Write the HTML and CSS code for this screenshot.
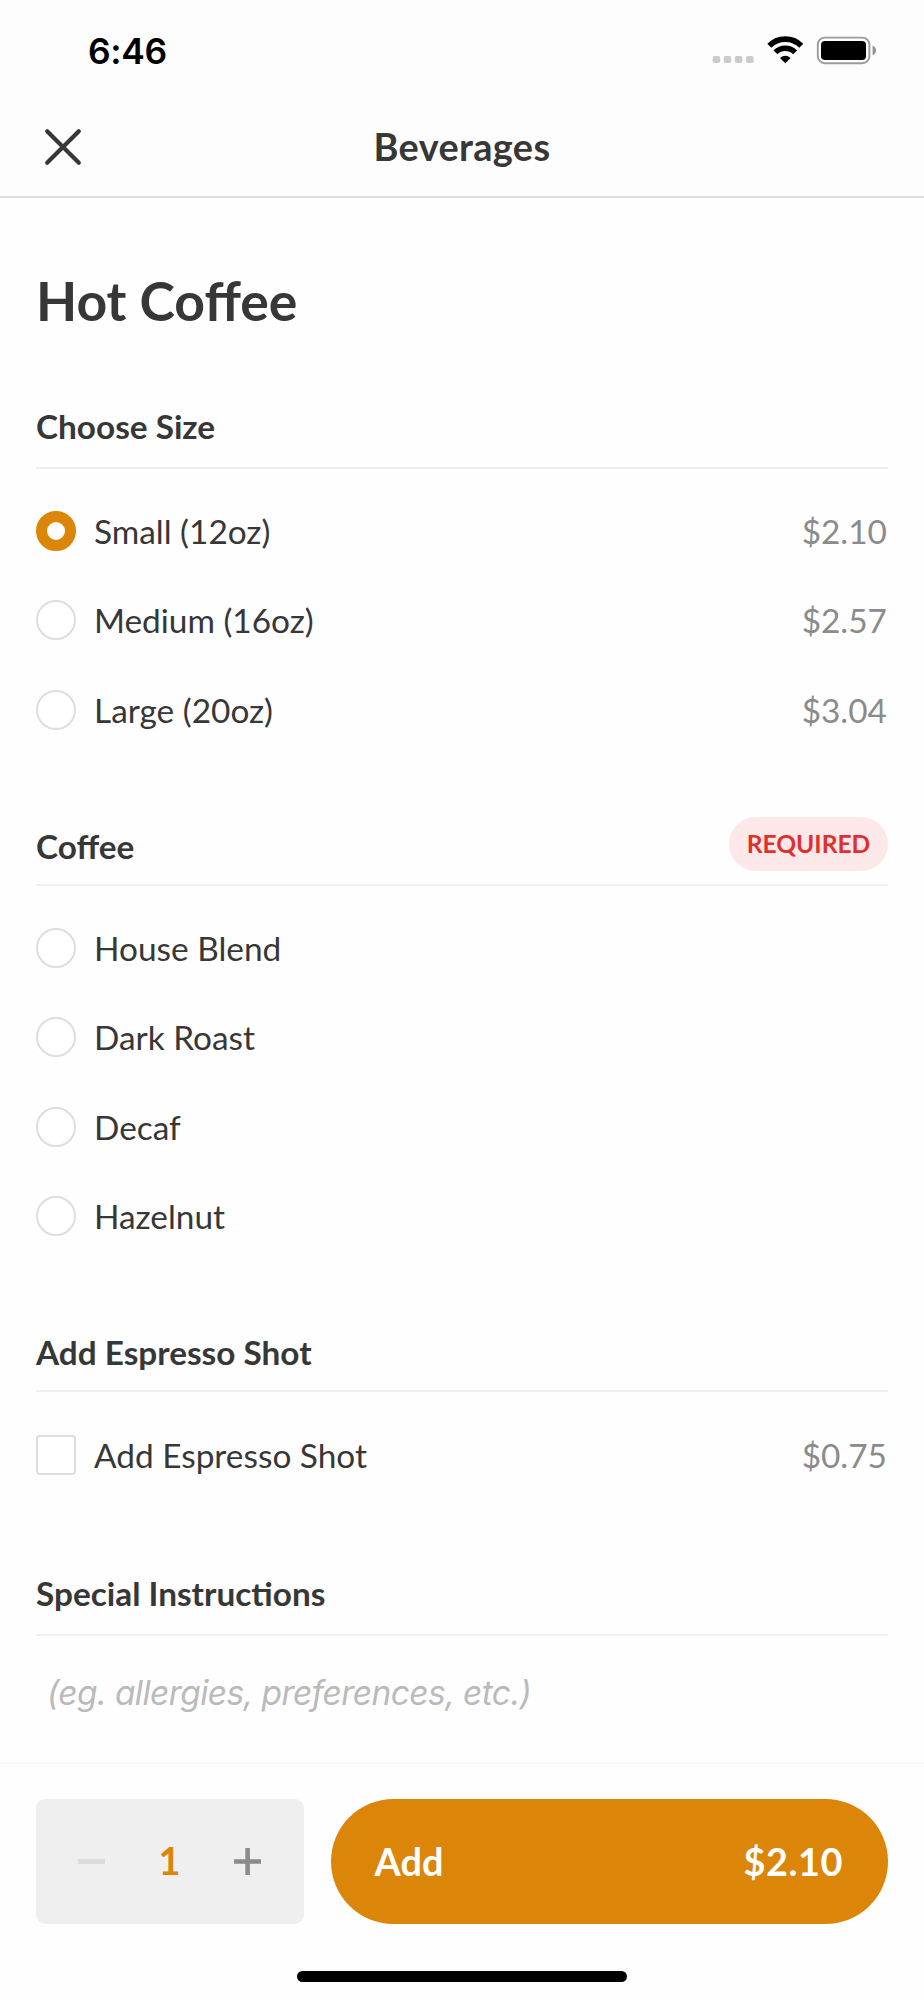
FILE: index.html
```html
<!DOCTYPE html>
<html lang="en">
<head>
<meta charset="utf-8">
<title>Beverages</title>
<link rel="stylesheet" href="styles.css">
</head>
<body>
<div class="app">
  <header class="top">
    <div class="status">
      <span class="time">6:46</span>
      <svg class="status-icons" width="166" height="30" viewBox="0 0 166 30">
        <g fill="#cbcbcb">
          <rect x="0.6" y="20" width="7.6" height="7" rx="2"/>
          <rect x="11.7" y="20" width="7.6" height="7" rx="2"/>
          <rect x="22.8" y="20" width="7.6" height="7" rx="2"/>
          <rect x="34" y="20" width="7.6" height="7" rx="2"/>
        </g>
        <g fill="none" stroke="#000" stroke-width="5.6">
          <path d="M57.3 9.8 A22.6 22.6 0 0 1 89.3 9.8"/>
          <path d="M63.5 16.4 A13.8 13.8 0 0 1 83.1 16.4"/>
        </g>
        <path d="M68 22 Q73.3 17.6 78.6 22 L73.3 27.2 Z" fill="#000"/>
        <rect x="105.8" y="1.6" width="51.6" height="25.6" rx="7" fill="none" stroke="#9b9b9b" stroke-width="1.9"/>
        <rect x="109" y="5" width="45" height="19" rx="4" fill="#000"/>
        <path d="M160.6 9.5 Q164 11.2 164 14.4 Q164 17.6 160.6 19.3 Z" fill="#929292"/>
      </svg>
    </div>
    <div class="nav">
      <svg class="close" width="38" height="38" viewBox="0 0 38 38"><path d="M3.2 3.2 L34.8 34.8 M34.8 3.2 L3.2 34.8" stroke="#373737" stroke-width="4.2" stroke-linecap="round"/></svg>
      <span class="nav-title">Beverages</span>
    </div>
  </header>

  <main class="content">
    <h1 class="title">Hot Coffee</h1>

    <section class="group group-size">
      <div class="group-head roomy"><h2>Choose Size</h2></div>
      <div class="options">
        <label class="option"><span class="radio selected"></span><span class="name">Small (12oz)</span><span class="price">$2.10</span></label>
        <label class="option"><span class="radio"></span><span class="name">Medium (16oz)</span><span class="price">$2.57</span></label>
        <label class="option"><span class="radio"></span><span class="name">Large (20oz)</span><span class="price">$3.04</span></label>
      </div>
    </section>

    <section class="group group-coffee">
      <div class="group-head"><h2>Coffee</h2><span class="badge">REQUIRED</span></div>
      <div class="options">
        <label class="option"><span class="radio"></span><span class="name">House Blend</span></label>
        <label class="option"><span class="radio"></span><span class="name">Dark Roast</span></label>
        <label class="option"><span class="radio"></span><span class="name">Decaf</span></label>
        <label class="option"><span class="radio"></span><span class="name">Hazelnut</span></label>
      </div>
    </section>

    <section class="group group-shot">
      <div class="group-head"><h2>Add Espresso Shot</h2></div>
      <div class="options">
        <label class="option"><span class="checkbox"></span><span class="name">Add Espresso Shot</span><span class="price">$0.75</span></label>
      </div>
    </section>

    <section class="group group-notes">
      <div class="group-head roomy"><h2>Special Instructions</h2></div>
      <div class="notes">(eg. allergies, preferences, etc.)</div>
    </section>
  </main>

  <footer class="bar">
    <div class="actions">
      <div class="stepper">
        <svg width="27" height="27" viewBox="0 0 27 27"><path d="M0 13.5 H27" stroke="#dcdcdc" stroke-width="5"/></svg>
        <span class="count">1</span>
        <svg width="27" height="27" viewBox="0 0 27 27"><path d="M0 13.5 H27 M13.6 0 V27" stroke="#8b8b8b" stroke-width="4.6"/></svg>
      </div>
      <div class="add"><span>Add</span><span class="total">$2.10</span></div>
    </div>
    <div class="home"></div>
  </footer>
</div>
</body>
</html>
```

FILE: styles.css
```css
* { box-sizing: border-box; }
body { margin: 0; background: #fefefe; font-family: Lato, sans-serif; color: #373737; }
.app { width: 924px; height: 2000px; display: flex; flex-direction: column; overflow: hidden; }

.top { height: 198px; background: #fdfdfd; border-bottom: 2px solid #dcdcdc; flex: none; }
.status { height: 100px; padding: 36px 46px 0 88px; display: flex; justify-content: space-between; align-items: flex-start; }
.time { font: 600 35.4px/32px Inter, sans-serif; letter-spacing: -0.3px; color: #000; }
.status-icons { flex: none; }
.nav { height: 96px; display: grid; grid-template-columns: 200px 1fr 200px; align-items: center; }
.close { margin: -2px 0 0 43.5px; }
.nav-title { padding-bottom: 2px; text-align: center; font-size: 37.9px; font-weight: 700; line-height: 46px; letter-spacing: 0.35px; }

.content { height: 1564px; padding: 0 36px; flex: none; }
.title { margin: 0; padding-top: 68px; font-size: 53.5px; line-height: 68px; font-weight: 700; }
.group { display: flex; flex-direction: column; }
.group-size { margin-top: 72px; }
.group-coffee { margin-top: 62.4px; }
.group-shot { margin-top: 71.4px; }
.group-notes { margin-top: 73.4px; }
.group-head { display: flex; justify-content: space-between; align-items: flex-end; border-bottom: 2px solid #efefef; }
.group-head h2 { margin: 0 0 18px; font-size: 33.35px; line-height: 40px; font-weight: 700; }
.group-head.roomy h2 { margin-bottom: 21px; }
.badge { width: 159px; height: 54px; margin-bottom: 13px; border-radius: 27px; background: #fde8e9; color: #df302d; font-size: 24.6px; line-height: 54px; font-weight: 700; text-align: center; }
.options { padding-top: 17.4px; }
.option { display: flex; align-items: center; height: 89.25px; font-size: 33.4px; line-height: 40px; }
.radio, .checkbox { width: 40px; height: 40px; margin-right: 18px; flex: none; border: 2px solid #dedede; background: #fff; }
.radio { border-radius: 50%; }
.radio.selected { border: 11px solid #dc8609; }
.checkbox { border-radius: 4px; }
.name { flex: 1; }
.price { color: #8b8b8b; padding-right: 1px; }
.group-coffee .options, .group-shot .options { padding-top: 18px; }
.notes { padding: 35px 11px 0; font: italic 400 33.5px/44px Inter, sans-serif; letter-spacing: -0.57px; color: #bababa; white-space: nowrap; }

.bar { height: 238px; border-top: 2px solid #f8f8f8; background: #fefefe; padding: 35px 36px 0; display: flex; flex-direction: column; align-items: center; flex: none; }
.actions { width: 100%; height: 125px; display: flex; gap: 26.5px; }
.stepper { width: 268px; border-radius: 9px; background: #efefef; padding: 0 43px 0 42px; display: flex; align-items: center; justify-content: space-between; }
.count { padding-bottom: 2px; color: #dc8609; font-size: 37.9px; font-weight: 700; line-height: 46px; }
.add { flex: 1; border-radius: 63px; background: #dc8609; color: #fff; padding: 0 45px 0 44px; display: flex; align-items: center; justify-content: space-between; font-size: 37.9px; font-weight: 700; }
.total { letter-spacing: 0.5px; }
.home { width: 330px; height: 11px; margin-top: 47px; border-radius: 6px; background: #000; }
```
